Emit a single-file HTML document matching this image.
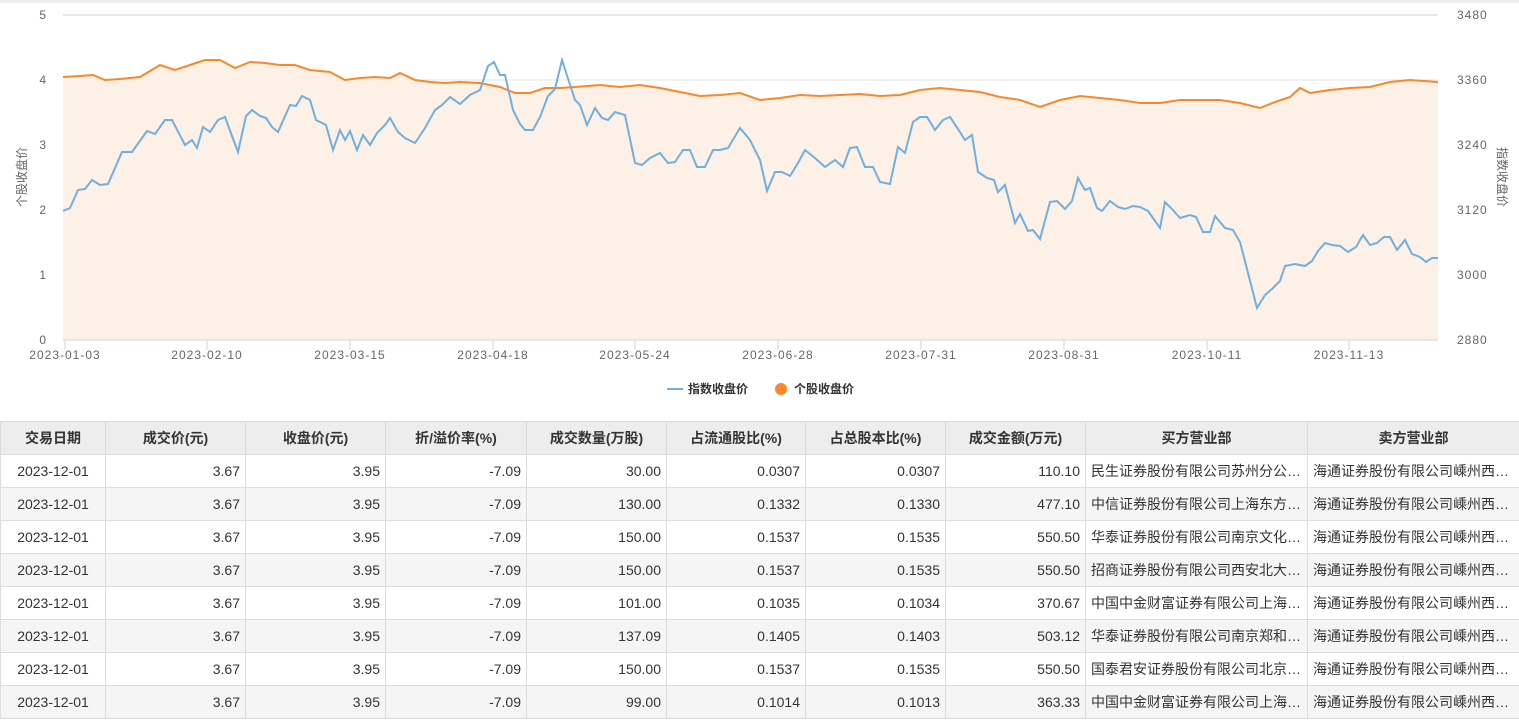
<!DOCTYPE html>
<html><head><meta charset="utf-8"><style>
body{margin:0;width:1519px;height:722px;overflow:hidden;background:#fff;font-family:"Liberation Sans","Noto Sans CJK SC",sans-serif;}
.top{position:absolute;left:0;top:0;width:1519px;height:3px;background:#eee}
svg{position:absolute;left:0;top:0}
table{position:absolute;left:0;top:421px;width:1519px;border-collapse:collapse;font-size:14px;color:#333;table-layout:fixed}
td,th{border:1px solid #ddd;height:32px;padding:0 5px;white-space:nowrap;overflow:hidden;text-overflow:ellipsis}
th{background:#ededed;font-weight:bold;text-align:center}
td{text-align:right}
td:first-child{text-align:center}
td.l{text-align:left}
tr:nth-child(odd) td{background:#f5f5f5}
</style></head><body>
<div class="top"></div>
<svg width="1519" height="420" font-family="Liberation Sans, Noto Sans CJK SC, sans-serif">
<g stroke="#e6e6e6" stroke-width="1">
<line x1="63" y1="15" x2="1438" y2="15" stroke="#e8e8e8" stroke-width="2"/>
<line x1="63" y1="80" x2="1438" y2="80"/><line x1="63" y1="145" x2="1438" y2="145"/>
<line x1="63" y1="210" x2="1438" y2="210"/><line x1="63" y1="275" x2="1438" y2="275"/>
</g>
<polygon fill="#fdf0e6" points="63,340 63,77 80,76 93,75 105,80 120,79 140,77 160,65 175,70 190,65 205,60 220,60 235,68 250,62 265,63 280,65 295,65 310,70 330,72 345,80 360,78 375,77 390,78 400,73 415,80 430,82 445,83 460,82 480,83 500,87 515,93 530,93 545,88 560,88 575,87 600,85 620,87 640,85 660,88 680,92 700,96 720,95 740,93 760,100 780,98 800,95 820,96 840,95 860,94 880,96 900,95 920,90 940,88 960,90 980,92 1000,97 1020,100 1040,107 1060,100 1080,96 1100,98 1120,100 1140,103 1160,103 1180,100 1200,100 1220,100 1240,103 1260,108 1275,102 1290,97 1300,88 1310,93 1330,90 1350,88 1370,87 1390,82 1410,80 1438,82 1438,340"/>
<polyline fill="none" stroke="#f7892b" stroke-width="2" points="63,77 80,76 93,75 105,80 120,79 140,77 160,65 175,70 190,65 205,60 220,60 235,68 250,62 265,63 280,65 295,65 310,70 330,72 345,80 360,78 375,77 390,78 400,73 415,80 430,82 445,83 460,82 480,83 500,87 515,93 530,93 545,88 560,88 575,87 600,85 620,87 640,85 660,88 680,92 700,96 720,95 740,93 760,100 780,98 800,95 820,96 840,95 860,94 880,96 900,95 920,90 940,88 960,90 980,92 1000,97 1020,100 1040,107 1060,100 1080,96 1100,98 1120,100 1140,103 1160,103 1180,100 1200,100 1220,100 1240,103 1260,108 1275,102 1290,97 1300,88 1310,93 1330,90 1350,88 1370,87 1390,82 1410,80 1438,82"/>
<polyline fill="none" stroke="#6fb0e0" stroke-width="2" points="63,211 70,208 78,190 85,189 92,180 100,185 108,184 122,152 132,152 147,131 155,134 165,120 172,120 185,145 192,140 197,148 203,127 210,132 218,120 225,117 232,136 238,152 246,116 252,110 260,116 266,118 272,127 278,132 290,105 296,106 302,96 310,100 316,120 326,125 333,150 340,130 345,140 350,131 357,150 363,135 370,145 377,133 385,125 390,118 398,132 405,138 415,143 425,128 435,110 442,105 450,97 460,104 470,95 480,90 488,66 494,62 500,75 505,75 513,110 520,124 525,130 533,130 540,117 548,96 555,89 562,60 575,100 580,105 587,125 595,108 602,118 608,120 615,112 625,115 635,163 642,165 650,158 660,153 668,163 675,162 683,150 690,150 697,167 705,167 713,150 720,150 728,148 740,128 750,140 760,160 767,191 775,172 782,172 790,176 798,163 805,150 815,158 825,167 835,160 843,167 850,148 857,147 865,167 873,167 880,182 890,184 898,147 905,153 913,122 920,117 927,117 935,130 943,120 950,117 958,129 965,140 972,135 978,172 987,178 994,180 998,192 1005,185 1015,223 1020,214 1028,231 1033,230 1040,239 1050,202 1057,201 1065,209 1072,201 1078,178 1085,190 1090,188 1097,208 1102,211 1110,201 1118,207 1125,209 1133,206 1140,207 1148,211 1160,228 1165,202 1172,209 1180,218 1190,215 1196,217 1203,232 1210,232 1215,216 1225,228 1233,230 1240,242 1248,273 1257,308 1265,295 1272,289 1280,281 1285,266 1295,264 1305,266 1312,261 1318,251 1325,243 1332,245 1340,246 1348,252 1356,247 1363,235 1370,245 1377,243 1384,237 1390,237 1397,250 1405,240 1412,254 1420,257 1426,262 1432,258 1438,258"/>
<line x1="63" y1="340" x2="1438" y2="340" stroke="#ccd6eb"/>
<g stroke="#ccd6eb"><line x1="65" y1="340" x2="65" y2="350"/><line x1="207" y1="340" x2="207" y2="350"/><line x1="350" y1="340" x2="350" y2="350"/><line x1="493" y1="340" x2="493" y2="350"/><line x1="635" y1="340" x2="635" y2="350"/><line x1="778" y1="340" x2="778" y2="350"/><line x1="921" y1="340" x2="921" y2="350"/><line x1="1064" y1="340" x2="1064" y2="350"/><line x1="1207" y1="340" x2="1207" y2="350"/><line x1="1349" y1="340" x2="1349" y2="350"/></g>
<g font-size="12" fill="#666" text-anchor="end"><text x="46" y="19">5</text><text x="46" y="84">4</text><text x="46" y="149">3</text><text x="46" y="214">2</text><text x="46" y="279">1</text><text x="46" y="344">0</text></g>
<g font-size="12" fill="#666" letter-spacing="1"><text x="1457" y="19">3480</text><text x="1457" y="84">3360</text><text x="1457" y="149">3240</text><text x="1457" y="214">3120</text><text x="1457" y="279">3000</text><text x="1457" y="344">2880</text></g>
<g font-size="12" fill="#666" text-anchor="middle" letter-spacing="1"><text x="65" y="359">2023-01-03</text><text x="207" y="359">2023-02-10</text><text x="350" y="359">2023-03-15</text><text x="493" y="359">2023-04-18</text><text x="635" y="359">2023-05-24</text><text x="778" y="359">2023-06-28</text><text x="921" y="359">2023-07-31</text><text x="1064" y="359">2023-08-31</text><text x="1207" y="359">2023-10-11</text><text x="1349" y="359">2023-11-13</text></g>
<text transform="translate(26,177) rotate(-90)" font-size="12" fill="#666" text-anchor="middle">个股收盘价</text>
<text transform="translate(1498,177) rotate(90)" font-size="12" fill="#666" text-anchor="middle">指数收盘价</text>
<line x1="667" y1="389" x2="683" y2="389" stroke="#6fb0e0" stroke-width="2"/>
<text x="688" y="393" font-size="12" font-weight="bold" fill="#333">指数收盘价</text>
<circle cx="781" cy="389" r="6" fill="#f7892b"/>
<text x="794" y="393" font-size="12" font-weight="bold" fill="#333">个股收盘价</text>
</svg>
<table>
<colgroup><col style="width:105px"><col style="width:140px"><col style="width:140px"><col style="width:141px"><col style="width:140px"><col style="width:139px"><col style="width:140px"><col style="width:140px"><col style="width:222px"><col style="width:212px"></colgroup>
<tr><th>交易日期</th><th>成交价(元)</th><th>收盘价(元)</th><th>折/溢价率(%)</th><th>成交数量(万股)</th><th>占流通股比(%)</th><th>占总股本比(%)</th><th>成交金额(万元)</th><th>买方营业部</th><th>卖方营业部</th></tr>
<tr><td>2023-12-01</td><td>3.67</td><td>3.95</td><td>-7.09</td><td>30.00</td><td>0.0307</td><td>0.0307</td><td>110.10</td><td class="l">民生证券股份有限公司苏州分公司证券营业部</td><td class="l">海通证券股份有限公司嵊州西路证券营业部</td></tr>
<tr><td>2023-12-01</td><td>3.67</td><td>3.95</td><td>-7.09</td><td>130.00</td><td>0.1332</td><td>0.1330</td><td>477.10</td><td class="l">中信证券股份有限公司上海东方路证券营业部</td><td class="l">海通证券股份有限公司嵊州西路证券营业部</td></tr>
<tr><td>2023-12-01</td><td>3.67</td><td>3.95</td><td>-7.09</td><td>150.00</td><td>0.1537</td><td>0.1535</td><td>550.50</td><td class="l">华泰证券股份有限公司南京文化路证券营业部</td><td class="l">海通证券股份有限公司嵊州西路证券营业部</td></tr>
<tr><td>2023-12-01</td><td>3.67</td><td>3.95</td><td>-7.09</td><td>150.00</td><td>0.1537</td><td>0.1535</td><td>550.50</td><td class="l">招商证券股份有限公司西安北大街证券营业部</td><td class="l">海通证券股份有限公司嵊州西路证券营业部</td></tr>
<tr><td>2023-12-01</td><td>3.67</td><td>3.95</td><td>-7.09</td><td>101.00</td><td>0.1035</td><td>0.1034</td><td>370.67</td><td class="l">中国中金财富证券有限公司上海分公司</td><td class="l">海通证券股份有限公司嵊州西路证券营业部</td></tr>
<tr><td>2023-12-01</td><td>3.67</td><td>3.95</td><td>-7.09</td><td>137.09</td><td>0.1405</td><td>0.1403</td><td>503.12</td><td class="l">华泰证券股份有限公司南京郑和路证券营业部</td><td class="l">海通证券股份有限公司嵊州西路证券营业部</td></tr>
<tr><td>2023-12-01</td><td>3.67</td><td>3.95</td><td>-7.09</td><td>150.00</td><td>0.1537</td><td>0.1535</td><td>550.50</td><td class="l">国泰君安证券股份有限公司北京分公司</td><td class="l">海通证券股份有限公司嵊州西路证券营业部</td></tr>
<tr><td>2023-12-01</td><td>3.67</td><td>3.95</td><td>-7.09</td><td>99.00</td><td>0.1014</td><td>0.1013</td><td>363.33</td><td class="l">中国中金财富证券有限公司上海分公司</td><td class="l">海通证券股份有限公司嵊州西路证券营业部</td></tr>
</table>
</body></html>
